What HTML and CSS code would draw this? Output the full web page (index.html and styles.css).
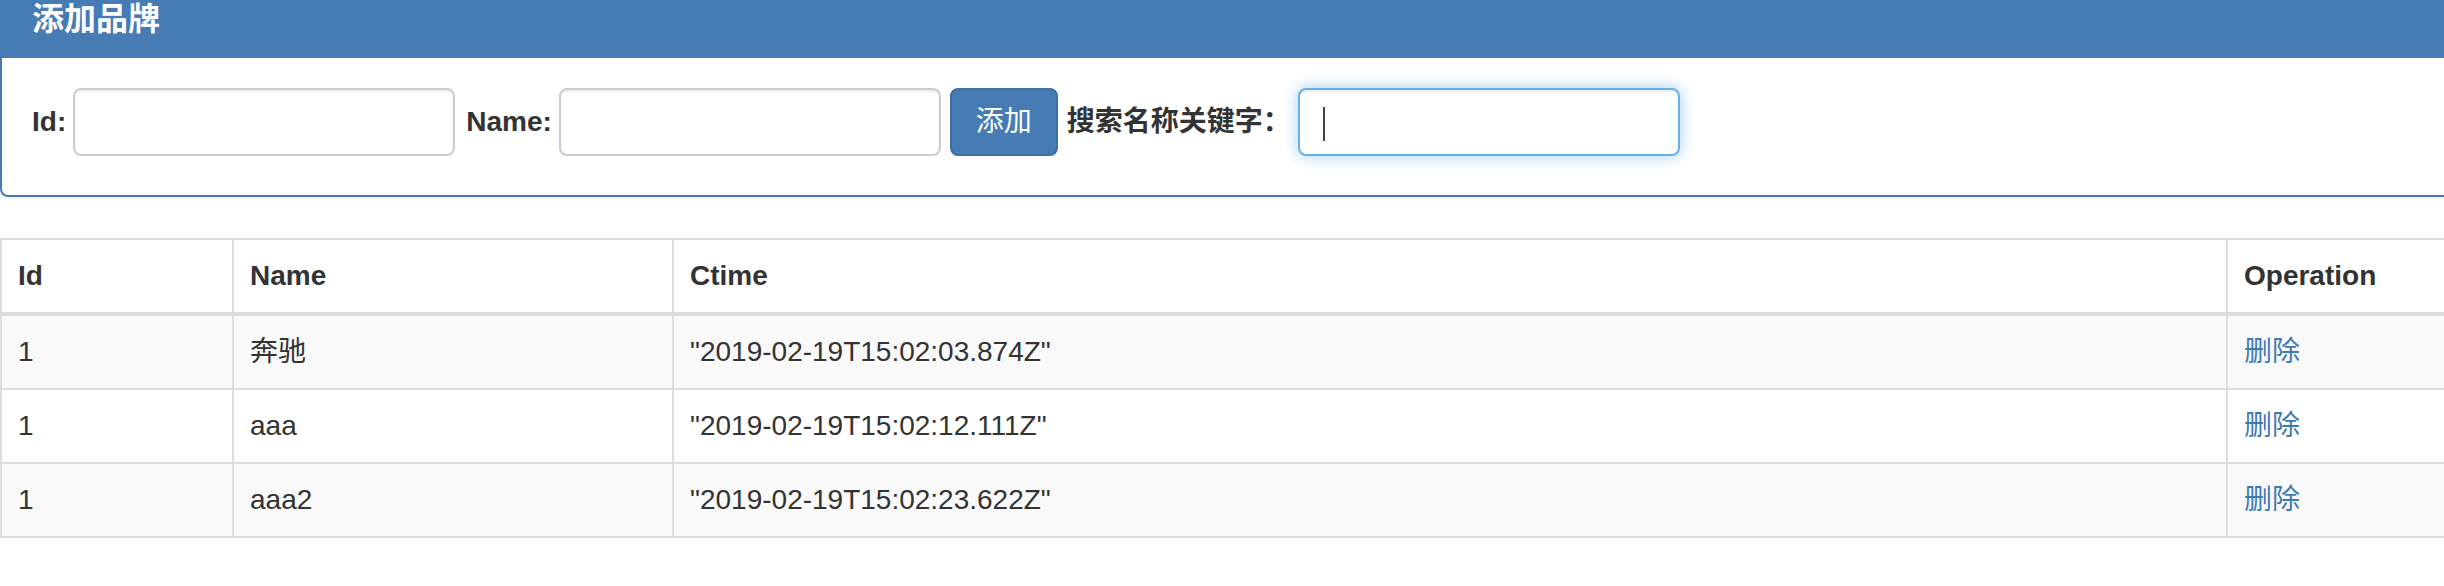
FILE: index.html
```html
<!DOCTYPE html>
<html lang="zh-CN">
<head>
<meta charset="utf-8">
<title>添加品牌</title>
<link rel="stylesheet" href="styles.css">
</head>
<body>
<div class="container">
  <div class="panel">
    <div class="panel-heading">
      <h3 class="panel-title">添加品牌</h3>
    </div>
    <div class="panel-body">
      <label class="lbl">Id:</label>
      <input class="form-control" type="text">
      <label class="lbl lbl-name">Name:</label>
      <input class="form-control" type="text">
      <button class="btn" type="button">添加</button>
      <label class="lbl lbl-search">搜索名称关键字：</label>
      <span class="search-wrap">
        <input class="form-control focused" type="text">
        <span class="caret"></span>
      </span>
    </div>
  </div>

  <table class="table">
    <colgroup>
      <col class="c1"><col class="c2"><col class="c3"><col class="c4">
    </colgroup>
    <thead>
      <tr><th>Id</th><th>Name</th><th>Ctime</th><th>Operation</th></tr>
    </thead>
    <tbody>
      <tr><td>1</td><td>奔驰</td><td>"2019-02-19T15:02:03.874Z"</td><td><a class="link" href="#">删除</a></td></tr>
      <tr><td>1</td><td>aaa</td><td>"2019-02-19T15:02:12.111Z"</td><td><a class="link" href="#">删除</a></td></tr>
      <tr><td>1</td><td>aaa2</td><td>"2019-02-19T15:02:23.622Z"</td><td><a class="link" href="#">删除</a></td></tr>
    </tbody>
  </table>
</div>
</body>
</html>
```
FILE: styles.css
```css
* { box-sizing: border-box; }

html, body {
  margin: 0;
  padding: 0;
  background: #fff;
  overflow: hidden;
}

body {
  font-family: "Liberation Sans", "Noto Sans CJK SC", sans-serif;
  font-size: 28px;
  line-height: 40px;
  color: #333;
}

.container {
  width: 2470px;
}

.panel {
  border: 2px solid #467bb4;
  border-top: none;
  border-radius: 0 0 8px 8px;
  box-shadow: 0 2px 2px rgba(0, 0, 0, 0.05);
  margin-bottom: 41px;
  background: #fff;
}

.panel-heading {
  background: #467bb4;
  color: #fff;
  padding: 2px 30px 21px;
}

.panel-title {
  margin: 0;
  font-size: 32px;
  line-height: 35px;
  font-weight: bold;
}

.panel-body {
  display: flex;
  align-items: center;
  gap: 7px;
  padding: 30px 30px 39px;
}

.lbl {
  font-weight: bold;
  white-space: nowrap;
}

.lbl-name {
  margin-left: 4px;
}

.lbl-search {
  margin-left: 2px;
}

.form-control {
  width: 382px;
  height: 68px;
  padding: 12px 24px;
  font: inherit;
  color: #555;
  background: #fff;
  border: 2px solid #ccc;
  border-radius: 8px;
  box-shadow: inset 0 2px 2px rgba(0, 0, 0, 0.075);
  outline: none;
  display: block;
}

.form-control.focused {
  border-color: #66afe9;
  box-shadow: inset 0 2px 2px rgba(0, 0, 0, 0.075), 0 0 16px rgba(102, 175, 233, 0.6);
}

.search-wrap {
  position: relative;
  display: block;
}

.caret {
  position: absolute;
  left: 25px;
  top: 19px;
  width: 2px;
  height: 34px;
  background: #444;
}

.btn {
  height: 68px;
  margin-left: 2px;
  padding: 12px 24px;
  font: inherit;
  color: #fff;
  background: #467bb4;
  border: 2px solid #3d6ea5;
  border-radius: 8px;
  cursor: pointer;
}

.table {
  width: 2470px;
  border-collapse: collapse;
  border-spacing: 0;
  table-layout: fixed;
  border: 2px solid #ddd;
}

.c1 { width: 232px; }
.c2 { width: 440px; }
.c3 { width: 1554px; }
.c4 { width: 244px; }

.table th,
.table td {
  padding: 16px;
  line-height: 40px;
  text-align: left;
  vertical-align: top;
  border: 2px solid #ddd;
  white-space: nowrap;
}

.table th {
  font-weight: bold;
  border-bottom-width: 4px;
}

.table tbody tr:nth-child(odd) {
  background: #f9f9f9;
}

.link {
  color: #3f79b5;
  text-decoration: none;
}
```
